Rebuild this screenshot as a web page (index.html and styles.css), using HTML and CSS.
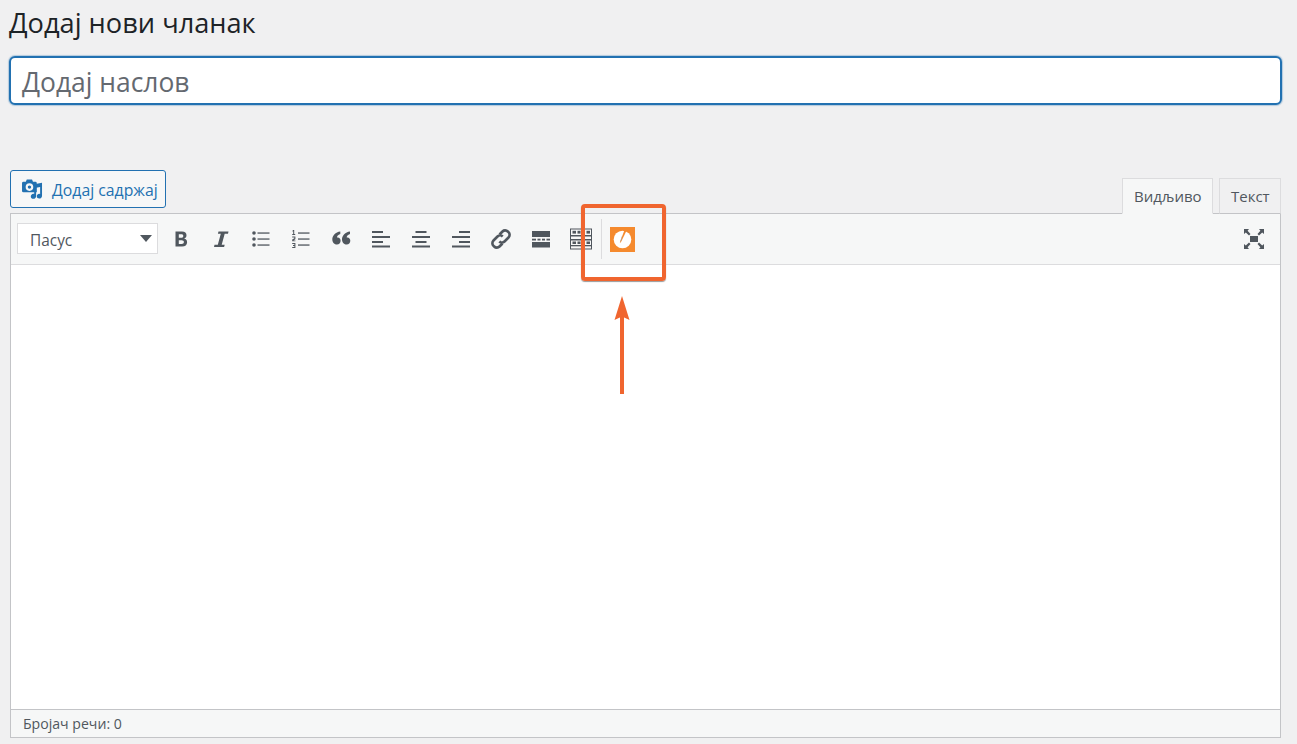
FILE: index.html
```html
<!DOCTYPE html>
<html lang="sr">
<head>
<meta charset="utf-8">
<title>Додај нови чланак</title>
<link rel="stylesheet" href="styles.css">
</head>
<body>
<main class="page">
  <h1 class="title">Додај нови чланак</h1>
  <div class="title-input">Додај наслов</div>
  <div class="tabs-row">
    <button class="media-btn">
      <svg class="media-icon" viewBox="0 0 22 21"><path fill="#2271b1" fill-rule="evenodd" d="M1.500 3H4l1-2.500h5.500L11.500 3H14q1.500 0 1.500 1.500V14H1.500Q0 14 0 12.500v-8Q0 3 1.500 3zM7.800 4.500a4 4 0 1 0 0 8 4 4 0 0 0 0-8zm0 2.200a1.800 1.800 0 1 1 0 3.600 1.800 1.800 0 0 1 0-3.600z"/><path fill="#2271b1" d="M11 15.500h1.800V5.500L21 4v13.500c0 1.700-1.200 3-2.900 3-1.500 0-2.600-1-2.600-2.400 0-1.500 1.200-2.500 2.700-2.500l.8.100V8.500l-4.200.7V18c0 1.500-1.200 2.800-2.900 2.800-1.500 0-2.700-1-2.700-2.500 0-1.400 1.100-2.500 2.800-2.800z"/></svg>
      <span class="media-label">Додај садржај</span>
    </button>
    <div class="tabs">
      <span class="tab tab-active">Видљиво</span>
      <span class="tab">Текст</span>
    </div>
  </div>
  <section class="editor">
    <div class="toolbar">
      <div class="select"><span class="select-label">Пасус</span><i class="caret"></i></div>
      <button class="tool"><svg viewBox="0 0 20 20"><path fill="#50575e" d="M4.500 2.500h6.500c3 0 4.500 1.500 4.500 3.800 0 1.700-1 2.900-2.400 3.300 1.900.3 3 1.700 3 3.600 0 2.700-1.900 4.300-5 4.300H4.500zm3.300 2.700v3.500h2.500c1.300 0 2-.7 2-1.800s-.7-1.700-2-1.700zm0 6v3.800h2.800c1.500 0 2.300-.7 2.300-1.900s-.8-1.900-2.300-1.900z"/></svg></button>
      <button class="tool"><svg viewBox="0 0 20 20"><path fill="#50575e" d="M7.500 2.500h10l-.5 2.200h-3.300l-3 11h3l-.6 2.300H3l.5-2.300h3.300l3-11H6.900z"/></svg></button>
      <button class="tool"><svg viewBox="0 0 20 20"><g fill="#50575e"><circle cx="3" cy="4" r="1.800"/><circle cx="3" cy="10" r="1.800"/><circle cx="3" cy="16" r="1.800"/><rect x="6.500" y="3.400" width="12" height="1.300"/><rect x="6.500" y="9.400" width="12" height="1.300"/><rect x="6.500" y="15.400" width="12" height="1.300"/></g></svg></button>
      <button class="tool"><svg viewBox="0 0 20 20"><g fill="#50575e"><path d="M2 1h1.200v4h1v.9H1.200V5h1V2.200L1.200 2.500z"/><path d="M1.200 7.600h3.200v2.600L2.300 11.400h2.100v.9H1.200v-1.800l2.200-1.200v-.8H1.200z"/><path d="M1.200 14h3.200v5H1.200v-.9h2.200v-1.200H2V16h1.400v-1.100H1.200z"/><rect x="7" y="3.400" width="11.500" height="1.300"/><rect x="7" y="9.400" width="11.500" height="1.300"/><rect x="7" y="15.400" width="11.500" height="1.300"/></g></svg></button>
      <button class="tool"><svg viewBox="0 0 20 20"><path fill="#50575e" d="M9.300 2.500v2.400C7 5.700 6 7 6 8.600c2-.5 3.600.8 3.600 3.200 0 2.200-1.500 3.700-3.600 3.700C3.600 15.500 1.300 13.600 1.300 10.200 1.300 6.800 4.500 3 9.300 2.500zm9.700 0v2.400c-2.300.8-3.300 2.100-3.300 3.700 2-.5 3.600.8 3.600 3.200 0 2.200-1.500 3.700-3.600 3.700-2.400 0-4.700-1.900-4.700-5.300 0-3.400 3.200-7.200 8-7.700z"/></svg></button>
      <button class="tool"><svg viewBox="0 0 20 20"><g fill="#50575e"><rect x="1" y="2" width="11" height="2"/><rect x="1" y="7" width="18" height="2"/><rect x="1" y="12" width="11" height="2"/><rect x="1" y="16.500" width="18" height="2"/></g></svg></button>
      <button class="tool"><svg viewBox="0 0 20 20"><g fill="#50575e"><rect x="4.500" y="2" width="11" height="2"/><rect x="1" y="7" width="18" height="2"/><rect x="4.500" y="12" width="11" height="2"/><rect x="1" y="16.500" width="18" height="2"/></g></svg></button>
      <button class="tool"><svg viewBox="0 0 20 20"><g fill="#50575e"><rect x="8" y="2" width="11" height="2"/><rect x="1" y="7" width="18" height="2"/><rect x="8" y="12" width="11" height="2"/><rect x="1" y="16.500" width="18" height="2"/></g></svg></button>
      <button class="tool tool-link"><svg viewBox="0 0 22 22"><g fill="none" stroke="#50575e" stroke-width="2.600"><path d="M9.500 6.500 12.500 3.500a3.700 3.700 0 0 1 5.300 0l.7.700a3.700 3.700 0 0 1 0 5.300L14.500 13.500a3.700 3.700 0 0 1-5.200 0"/><path d="M12.500 15.500 9.500 18.500a3.700 3.700 0 0 1-5.300 0l-.7-.7a3.700 3.700 0 0 1 0-5.300L7.500 8.500a3.700 3.700 0 0 1 5.200 0"/></g></svg></button>
      <button class="tool"><svg viewBox="0 0 20 20"><g fill="#50575e"><rect x="1" y="2" width="18" height="6"/><rect x="1" y="13" width="18" height="5.500"/><rect x="1" y="9.700" width="4" height="1.800"/><rect x="6.500" y="9.700" width="3" height="1.800"/><rect x="11" y="9.700" width="3" height="1.800"/><rect x="15.500" y="9.700" width="3.500" height="1.800"/></g></svg></button>
      <button class="tool tool-table"><svg viewBox="0 0 24 24"><path fill="#50575e" fill-rule="evenodd" d="M1 1.500h22v21H1zm1 1v5.500h20V2.500zm0 7v2.500h20V9.500zm0 4v8h20v-8z"/><g fill="#50575e"><rect x="3.500" y="3.800" width="3.500" height="2.800"/><rect x="8.500" y="3.800" width="3" height="2.800"/><rect x="13" y="3.800" width="3" height="2.800"/><rect x="17.500" y="3.800" width="3.500" height="2.800"/><rect x="3.500" y="14.500" width="3.500" height="2.500"/><rect x="8.500" y="14.500" width="3" height="2.500"/><rect x="13" y="14.500" width="3" height="2.500"/><rect x="17.500" y="14.500" width="3.500" height="2.500"/><rect x="1" y="18" width="22" height="1.300"/></g></svg></button>
      <span class="sep"></span>
      <span class="logo"><svg viewBox="0 0 25 25"><rect width="25" height="25" fill="#f58a2e"/><circle cx="12.500" cy="12.500" r="8.800" fill="#fff"/><path d="M9.800 15.500 14.300 3.500h2.300L10.800 15.500z" fill="#f58a2e"/><path d="M10 15 12.300 8 11.500 13z" fill="#a9a29a"/></svg></span>
      <button class="tool tool-end"><svg viewBox="0 0 22 22"><g fill="#50575e"><rect x="7" y="8" width="8" height="6"/><path d="M1 1h5L4.600 2.800 7.500 6 6 7.500 2.800 4.500 1 6z"/><path d="M21 1h-5l1.400 1.800L14.500 6 16 7.500l3.200-3L21 6z"/><path d="M1 21h5l-1.400-1.800L7.500 16 6 14.500l-3.200 3L1 16z"/><path d="M21 21h-5l1.400-1.800L14.500 16l1.500-1.500 3.200 3L21 16z"/></g></svg></button>
    </div>
    <div class="content"></div>
    <div class="status">Бројач речи: 0</div>
  </section>
</main>
<div class="callout"></div>
<svg class="arrow" viewBox="0 0 20 100"><rect x="8" y="20" width="4" height="79" fill="#f0652f"/><path d="M10 1 17.500 25 10 21.500 2.500 25z" fill="#f0652f"/></svg>
</body>
</html>
```
FILE: styles.css
```css
* { box-sizing: border-box; }
html, body { margin: 0; height: 100%; }
body {
  background: #f0f0f1;
  font-family: "Open Sans", "Noto Sans", sans-serif;
  color: #1d2327;
  overflow: hidden;
}
.page { padding: 0 15px 0 9px; }
.title {
  margin: 0;
  height: 56px;
  padding-top: 5px;
  font-size: 27.2px;
  line-height: 36px;
  font-weight: 400;
}
.title-input {
  height: 49px;
  width: 1273px;
  border: 2px solid #2271b1;
  border-radius: 6px;
  background: #fff;
  box-shadow: 0 0 1px 1px rgba(34, 113, 177, .3);
  padding: 0 11px;
  font-size: 26.4px;
  line-height: 48px;
  color: #646970;
}
.tabs-row {
  margin: 65px 0 0 1px;
  width: 1271px;
  height: 44px;
  display: flex;
  justify-content: space-between;
  align-items: flex-start;
}
.media-btn {
  width: 156px;
  height: 38px;
  display: flex;
  align-items: center;
  gap: 9px;
  padding: 0 0 0 11px;
  border: 1px solid #2271b1;
  border-radius: 3px;
  background: #f6f7f7;
  color: #2271b1;
  font: inherit;
  font-size: 15.8px;
}
.media-label { padding-top: 2px; }
.media-icon { width: 21px; height: 20px; flex: none; }
.tabs { display: flex; gap: 6px; margin-top: 8px; height: 36px; }
.tab {
  height: 36px;
  padding: 0 11px;
  border: 1px solid #dcdcde;
  border-bottom-color: #c3c4c7;
  background: #f0f0f1;
  color: #50575e;
  font-size: 15px;
  line-height: 34px;
  white-space: nowrap;
}
.tab-active {
  width: 91px;
  background: #f6f7f7;
  border-bottom-color: #f6f7f7;
  position: relative;
  z-index: 1;
}
.tab:last-child { width: 62px; }
.editor {
  margin-top: -1px;
  margin-left: 1px;
  width: 1271px;
  border: 1px solid #c3c4c7;
  background: #fff;
  height: 525px;
  display: flex;
  flex-direction: column;
}
.toolbar {
  height: 51px;
  flex: none;
  display: flex;
  align-items: center;
  padding: 0 0 1px 6px;
  background: #f6f7f7;
  border-bottom: 1px solid #dcdcde;
}
.select {
  width: 141px;
  height: 31px;
  margin-right: 3px;
  display: flex;
  align-items: center;
  justify-content: space-between;
  padding: 0 5px 0 12px;
  background: #fff;
  border: 1px solid #dcdcde;
  color: #50575e;
  font-size: 15.4px;
}
.select-label { padding-top: 3px; }
.caret {
  width: 0;
  height: 0;
  border: 6px solid transparent;
  border-top: 7px solid #50575e;
  border-bottom: 0;
}
.tool {
  width: 40px;
  height: 30px;
  margin-top: 1px;
  padding: 0;
  border: 0;
  background: none;
  display: flex;
  align-items: center;
  justify-content: center;
  flex: none;
}
.tool svg { width: 20px; height: 20px; display: block; }
.tool-table svg { width: 24px; height: 24px; }
.tool-link svg { width: 22px; height: 22px; }
.tool-end { margin-left: auto; margin-right: 6px; margin-top: 0; }
.tool-end svg { width: 22px; height: 22px; }
.sep {
  width: 1px;
  height: 40px;
  background: #dcdcde;
  flex: none;
}
.logo { width: 25px; height: 25px; margin-left: 8px; margin-top: 1px; flex: none; }
.logo svg { display: block; width: 25px; height: 25px; }
.content { flex: 1; background: #fff; }
.status {
  height: 28px;
  flex: none;
  background: #f6f7f7;
  border-top: 1px solid #c3c4c7;
  padding-left: 12px;
  font-size: 14.1px;
  line-height: 28px;
  color: #50575e;
}
.callout {
  position: absolute;
  left: 581px;
  top: 204px;
  width: 85px;
  height: 77px;
  border: 4px solid #f0652f;
  border-radius: 4px;
  box-shadow: 0 1px 1px rgba(0, 0, 0, .4);
}
.arrow {
  position: absolute;
  left: 612px;
  top: 295px;
  width: 20px;
  height: 100px;
}
```
